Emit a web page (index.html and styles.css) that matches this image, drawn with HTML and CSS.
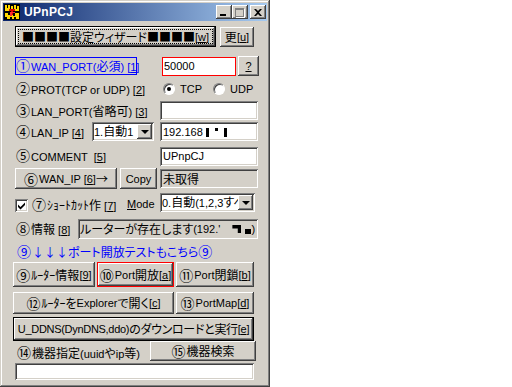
FILE: index.html
```html
<!DOCTYPE html>
<html lang="ja">
  <head>
    <meta charset="UTF-8" />
    <title>UPnPCJ</title>
    <link rel="stylesheet" href="styles.css">
  </head>
  <body>
    <div class="window">
      <div class="titlebar">
        <svg class="app-icon" width="16" height="16" viewBox="0 0 16 16">
          <rect width="16" height="16" fill="#000" />
          <path d="M1 1h2v3h1V1h2v4h1V2h2v3h1V1h2v4h1V2h2v5H1z" fill="#ffd800" />
          <path d="M1 9h3v2h2V9h3v3h2V9h4v6h-3v-2h-2v2H8v-2H6v2H3v-2H1z" fill="#ffd800" />
          <path d="M5 5h6v2H9v4H7V7H5z" fill="#e00000" />
          <path d="M6 8h5v1H8v3H6z" fill="#ff3030" />
        </svg>
        <span class="title">UPnPCJ</span>
        <div class="caption-btns">
          <span class="cap-btn"><span class="cap-min"></span></span>
          <span class="cap-btn"><span class="cap-max"></span></span>
          <span class="cap-btn cap-btn--close">
            <svg width="8" height="7" viewBox="0 0 8 7"><path d="M0 0h2l2 2 2-2h2L5 3.5 8 7H6L4 5 2 7H0l3-3.5z" fill="#000" /></svg>
          </span>
        </div>
      </div>

      <div class="client">
        <div class="row row--wizard">
          <button class="btn btn--default wizard"><span class="focus-rect"><span class="j sq">■■■■</span><span class="j">設定ウィザード</span><span class="j sq">■■■■</span>[<u>w</u>]</span></button>
          <button class="btn update"><span class="j">更</span>[<u>u</u>]</button>
        </div>

        <div class="row row--wan">
          <span class="wan-label"><span class="c">①</span>WAN_PORT(<span class="j">必須</span>) [<u>1</u>]</span>
          <span class="field field--red wan-input">50000</span>
          <button class="btn help"><u>?</u></button>
        </div>

        <div class="row row--prot">
          <span class="label prot-label"><span class="c">②</span>PROT(TCP or UDP) [<u>2</u>]</span>
          <span class="radio radio--on"></span><span class="radio-text">TCP</span>
          <span class="radio radio--udp"></span><span class="radio-text">UDP</span>
        </div>

        <div class="row row--lanport">
          <span class="label wide-label"><span class="c">③</span>LAN_PORT(<span class="j">省略可</span>) [<u>3</u>]</span>
          <span class="field side-input"></span>
        </div>

        <div class="row row--lanip">
          <span class="label lanip-label"><span class="c">④</span>LAN_IP [<u>4</u>]</span>
          <span class="field combo combo--lanip"><span class="lanip-text">1.<span class="j">自動</span>1</span><span class="drop-btn"><span class="arrow"></span></span></span>
          <span class="field side-input ip-input">192.168 <span class="mask mask--a"></span><span class="mask mask--b"></span><span class="mask mask--c"></span></span>
        </div>

        <div class="row row--comment">
          <span class="label wide-label"><span class="c">⑤</span>COMMENT &nbsp;[<u>5</u>]</span>
          <span class="field side-input">UPnpCJ</span>
        </div>

        <div class="row row--wanip">
          <button class="btn wanip-btn"><span class="c">⑥</span>WAN_IP [<u>6</u>]<span class="j">→</span></button>
          <button class="btn copy-btn">Copy</button>
          <span class="field field--readonly side-input"><span class="j">未取得</span></span>
        </div>

        <div class="row row--mode">
          <span class="checkbox">
            <svg width="9" height="9" viewBox="0 0 9 9"><path d="M1 3.5l2.5 2.5L8 1.5V4L3.5 8.5 1 6z" fill="#000" /></svg>
          </span>
          <span class="check-text"><span class="c">⑦</span><span class="j">ｼｮｰﾄｶｯﾄ作</span> [<u>7</u>]</span>
          <span class="mode-text"><u>M</u>ode</span>
          <span class="field combo combo--mode"><span class="combo-text">0.<span class="j">自動</span>(1,2,3<span class="j">すべ</span></span><span class="drop-btn"><span class="arrow"></span></span></span>
        </div>

        <div class="row row--info">
          <span class="label info-label"><span class="c">⑧</span><span class="j">情報</span> [<u>8</u>]</span>
          <span class="field field--readonly info-field"><span class="j">ルーターが存在します</span>(192.'<span class="mask mask--d"></span><span class="mask mask--e"></span><span class="paren">)</span></span>
        </div>

        <div class="row row--note">
          <span class="note"><span class="c">⑨</span><span class="j">↓↓↓ポート開放テストもこちら</span><span class="c">⑨</span></span>
        </div>

        <div class="row row--btns1">
          <button class="btn router-btn"><span class="c">⑨</span><span class="j">ﾙｰﾀｰ情報</span>[<u>9</u>]</button>
          <button class="btn open-btn"><span class="c">⑩</span>Port<span class="j">開放</span>[<u>a</u>]</button>
          <button class="btn close-btn"><span class="c">⑪</span>Port<span class="j">閉鎖</span>[<u>b</u>]</button>
        </div>

        <div class="row row--btns2">
          <button class="btn explorer-btn"><span class="c">⑫</span><span class="j">ﾙｰﾀｰを</span>Explorer<span class="j">で開く</span>[<u>c</u>]</button>
          <button class="btn portmap-btn"><span class="c">⑬</span>PortMap[<u>d</u>]</button>
        </div>

        <div class="row row--ddns">
          <button class="btn btn--default ddns-btn">U_DDNS(DynDNS,ddo)<span class="j">のダウンロードと実行</span>[<u>e</u>]</button>
        </div>

        <div class="row row--device">
          <span class="label device-label"><span class="c">⑭</span><span class="j">機器指定</span>(uuid<span class="j">や</span>ip<span class="j">等</span>)</span>
          <button class="btn search-btn"><span class="c">⑮</span><span class="j">機器検索</span></button>
        </div>

        <div class="row row--target">
          <span class="field target-input"></span>
        </div>
      </div>
    </div>
  </body>
</html>
```

FILE: styles.css
```css
html,
body {
  margin: 0;
  background: #fff;
}
body {
  font-family: "Liberation Sans", "Noto Sans CJK JP", sans-serif;
  font-size: 11px;
  line-height: 14px;
  color: #000;
}
.j {
  font-family: "Noto Sans CJK JP", sans-serif;
  font-size: 12px;
  font-feature-settings: "palt";
}
.sq {
  font-feature-settings: normal;
}
.c {
  font-family: "Noto Sans CJK JP", sans-serif;
  font-size: 14px;
  line-height: 14px;
  margin-right: 1px;
}
u {
  text-decoration: underline;
  text-underline-offset: 1px;
}
.window {
  box-sizing: border-box;
  width: 270px;
  height: 387px;
  padding: 3px;
  background: #d4d0c8;
  box-shadow: inset -1px -1px #404040, inset 1px 1px #d4d0c8, inset -2px -2px #808080, inset 2px 2px #fff;
}
.titlebar {
  height: 18px;
  display: flex;
  align-items: center;
  background: linear-gradient(to right, #0a246a, #a6caf0);
}
.app-icon {
  margin-left: 1px;
  flex: 0 0 16px;
}
.title {
  margin-left: 4px;
  color: #fff;
  font-weight: 700;
  font-size: 12px;
  letter-spacing: 0.3px;
}
.caption-btns {
  margin-left: auto;
  margin-right: 1px;
  display: flex;
}
.cap-btn {
  width: 16px;
  height: 14px;
  display: flex;
  align-items: center;
  justify-content: center;
  background: #d4d0c8;
  box-shadow: inset -1px -1px #404040, inset 1px 1px #fff, inset -2px -2px #808080, inset 2px 2px #d4d0c8;
}
.cap-btn--close {
  margin-left: 2px;
}
.cap-min {
  width: 6px;
  height: 2px;
  background: #000;
  margin-top: 6px;
  margin-right: 2px;
}
.cap-max {
  width: 7px;
  height: 6px;
  border: 1px solid #808080;
  border-top-width: 2px;
  box-shadow: 1px 1px #fff;
  margin-right: 1px;
}

.client {
  padding-left: 12px;
  display: flex;
  flex-direction: column;
}
.row {
  display: flex;
  align-items: center;
  white-space: nowrap;
}
.btn {
  box-sizing: border-box;
  font: inherit;
  color: #000;
  padding: 0;
  border: none;
  background: #d4d0c8;
  box-shadow: inset -1px -1px #404040, inset 1px 1px #fff, inset -2px -2px #808080, inset 2px 2px #d4d0c8;
  display: flex;
  align-items: center;
  justify-content: center;
  white-space: nowrap;
}
.btn--default {
  border: 1px solid #000;
}
.field {
  box-sizing: border-box;
  display: flex;
  align-items: center;
  padding-left: 3px;
  background: #fff;
  box-shadow: inset 1px 1px #808080, inset -1px -1px #fff, inset 2px 2px #404040, inset -2px -2px #d4d0c8;
}
.field--readonly {
  background: #d4d0c8;
}
.field--red {
  border: 1px solid #ff0000;
  box-shadow: none;
  padding-left: 1px;
}
.label {
  display: block;
  padding-left: 1px;
}

/* row 1 */
.row--wizard {
  margin-top: 5px;
  height: 21px;
}
.wizard {
  width: 201px;
  height: 21px;
  padding: 3px;
}
.focus-rect {
  flex: 1;
  height: 13px;
  outline: 1px dotted #000;
  display: flex;
  align-items: center;
  justify-content: center;
}
.update {
  margin-left: 4px;
  width: 34px;
  height: 20px;
}

/* row 2 */
.row--wan {
  margin-top: 9px;
  height: 20px;
}
.wan-label {
  box-sizing: border-box;
  width: 122px;
  height: 18px;
  line-height: 16px;
  border: 1px solid #0000ff;
  color: #0000ff;
}
.wan-input {
  margin-left: 25px;
  width: 74px;
  height: 19px;
}
.help {
  margin-left: 2px;
  width: 21px;
  height: 20px;
}

/* row 3 */
.row--prot {
  margin-top: 6px;
  height: 14px;
}
.prot-label {
  width: 147px;
}
.radio {
  box-sizing: border-box;
  width: 12px;
  height: 12px;
  border-radius: 50%;
  background: #fff;
  border: 1px solid #808080;
  border-right-color: #fff;
  border-bottom-color: #fff;
  box-shadow: inset 1px 1px #404040;
  display: flex;
  align-items: center;
  justify-content: center;
}
.radio--on::after {
  content: "";
  width: 4px;
  height: 4px;
  border-radius: 50%;
  background: #000;
}
.radio--udp {
  margin-left: 11px;
}
.radio-text {
  margin-left: 5px;
}

/* row 4 */
.row--lanport {
  margin-top: 5px;
  height: 19px;
}
.wide-label {
  width: 144px;
}
.side-input {
  width: 98px;
  height: 19px;
}

/* row 5 */
.row--lanip {
  margin-top: 2px;
  height: 19px;
}
.lanip-label {
  width: 76px;
}
.combo {
  height: 19px;
  padding-left: 2px;
}
.combo--lanip {
  width: 62px;
  margin-right: 6px;
}
.lanip-text {
  flex: 0 0 auto;
}
.combo-text {
  overflow: hidden;
  flex: 1;
}
.drop-btn {
  box-sizing: border-box;
  flex: 0 0 15px;
  margin-left: auto;
  margin-right: 2px;
  height: 15px;
  background: #d4d0c8;
  box-shadow: inset -1px -1px #404040, inset 1px 1px #fff, inset -2px -2px #808080, inset 2px 2px #d4d0c8;
  display: flex;
  align-items: center;
  justify-content: center;
}
.arrow {
  width: 0;
  height: 0;
  border-left: 4px solid transparent;
  border-right: 4px solid transparent;
  border-top: 4px solid #000;
}
.mask {
  display: inline-block;
  background: #000;
}
.mask--a {
  width: 3px;
  height: 9px;
  margin-left: 3px;
  margin-top: 1px;
}
.mask--b {
  width: 3px;
  height: 3px;
  margin-left: 6px;
  margin-top: -5px;
}
.mask--c {
  width: 3px;
  height: 9px;
  margin-left: 6px;
  margin-top: 1px;
}

/* row 6 */
.row--comment {
  margin-top: 6px;
  height: 18px;
}

/* row 7 */
.row--wanip {
  margin-top: 3px;
  height: 21px;
}
.wanip-btn {
  width: 102px;
  height: 21px;
}
.copy-btn {
  margin-left: 3px;
  width: 37px;
  height: 21px;
}
.row--wanip .side-input {
  margin-left: 3px;
}

/* row 8 */
.row--mode {
  margin-top: 4px;
  height: 19px;
}
.checkbox {
  box-sizing: border-box;
  width: 13px;
  height: 13px;
  background: #fff;
  box-shadow: inset 1px 1px #808080, inset -1px -1px #fff, inset 2px 2px #404040, inset -2px -2px #d4d0c8;
  display: flex;
  align-items: center;
  justify-content: center;
  margin-top: 6px;
}
.check-text {
  display: block;
  margin-left: 4px;
  width: 95px;
  margin-top: 4px;
}
.mode-text {
  width: 33px;
  margin-top: 2px;
}
.combo--mode {
  width: 95px;
  height: 19px;
}

/* row 9 */
.row--info {
  margin-top: 7px;
  height: 20px;
}
.info-label {
  width: 62px;
}
.info-field {
  width: 180px;
  height: 20px;
  overflow: hidden;
  padding-left: 2px;
}
.mask--d {
  flex: 0 0 9px;
  height: 8px;
  margin-left: 12px;
  clip-path: polygon(0 0, 100% 0, 100% 100%, 60% 100%, 60% 45%, 0 45%);
}
.mask--e {
  flex: 0 0 6px;
  height: 5px;
  margin-left: 4px;
  margin-top: 4px;
}
.paren {
  margin-left: auto;
  margin-right: 4px;
}

/* row 10 */
.row--note {
  margin-top: 6px;
  height: 13px;
}
.note {
  display: block;
  color: #0000ff;
  padding-left: 2px;
}

/* row 11 */
.row--btns1 {
  margin-top: 4px;
  margin-left: -2px;
  height: 25px;
}
.router-btn {
  width: 82px;
  height: 25px;
}
.open-btn {
  margin-left: 2px;
  width: 77px;
  height: 25px;
  border: 1px solid #ff0000;
}
.close-btn {
  margin-left: 2px;
  width: 78px;
  height: 25px;
}

/* row 12 */
.row--btns2 {
  margin-top: 5px;
  margin-left: -2px;
  height: 22px;
}
.explorer-btn {
  width: 161px;
  height: 22px;
}
.portmap-btn {
  margin-left: 2px;
  width: 78px;
  height: 22px;
}

/* row 13 */
.row--ddns {
  margin-top: 3px;
  margin-left: -2px;
  height: 24px;
}
.ddns-btn {
  width: 241px;
  height: 24px;
  letter-spacing: -0.3px;
}

/* row 14 */
.row--device {
  height: 20px;
}
.device-label {
  width: 132px;
  padding-left: 2px;
  margin-top: 4px;
}
.search-btn {
  margin-left: 1px;
  width: 106px;
  height: 20px;
}

/* row 15 */
.row--target {
  margin-top: 2px;
  height: 17px;
}
.target-input {
  width: 239px;
  height: 17px;
}
```
